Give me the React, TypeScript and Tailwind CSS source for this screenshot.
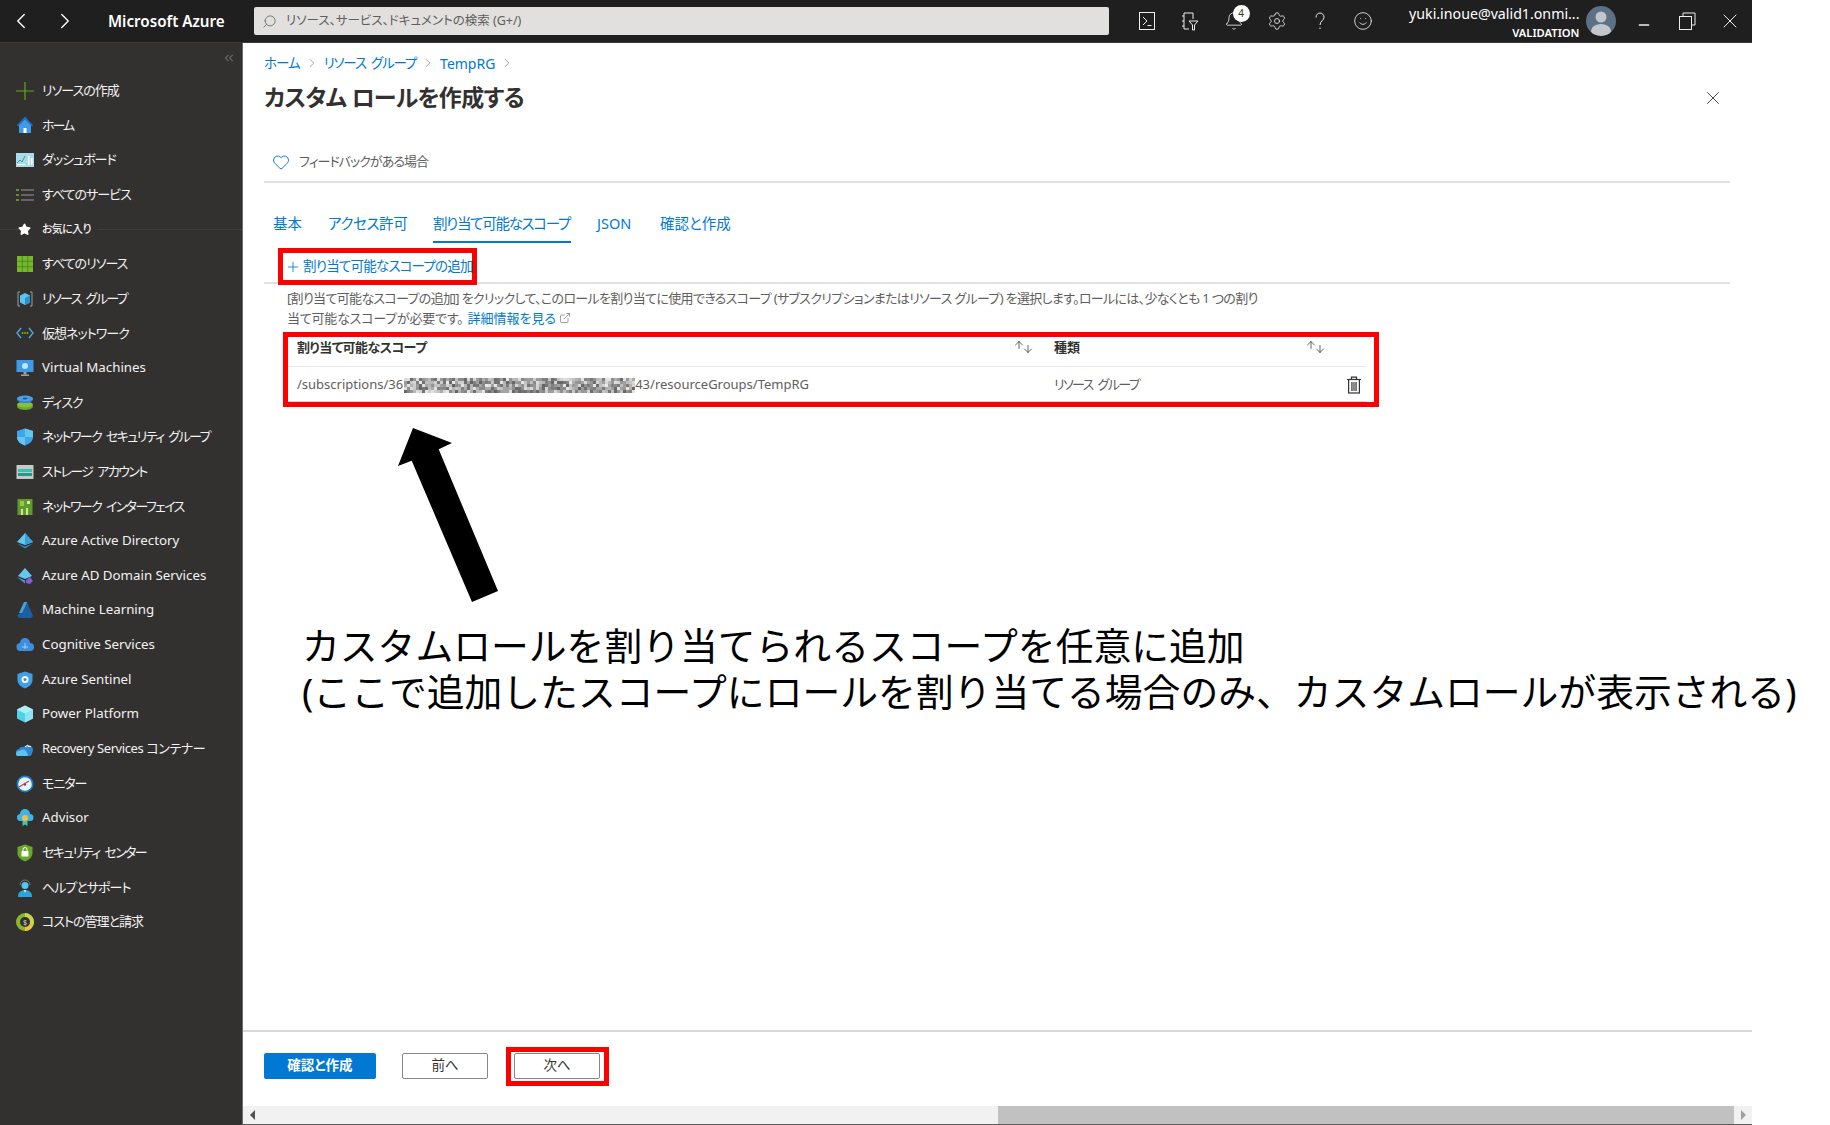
import type { ReactNode } from "react";
import { Search, ChevronLeft, ChevronRight, ChevronsLeft, Plus, X, Heart, ArrowUp, ArrowDown, Settings, Smile, Bell, Star, ExternalLink, Minus } from "lucide-react";

const Ico = ({ children }: { children: ReactNode }) => (
    <svg viewBox="0 0 18 18" className="w-[18px] h-[18px] shrink-0">{children}</svg>
);

const icons: Record<string, ReactNode> = {
    create: <><path d="M9 0v18M0 9h18" stroke="#5ea90f" strokeWidth="1.2" /></>,
    home: <><path d="M9 1 17 9.5h-2V17H3V9.500H1z" fill="#3f9ae8" /><path d="M9 1 1 9.500h2L9 3.500l6 6h2z" fill="#1c6fc4" /><rect x="7.500" y="12" width="3" height="5" fill="#fff" /></>,
    dashboard: <><rect x="0" y="2" width="18" height="14" fill="#a9dcea" /><path d="M1 12l3-3 2 2 3-6" stroke="#3a9a8a" fill="none" /><path d="M1 13.500h8" stroke="#fff" /><rect x="12" y="5" width="1.500" height="9" fill="#fff" /><rect x="15" y="7" width="1.500" height="7" fill="#fff" /></>,
    services: <><path d="M5 4h13M5 9h13M5 14h13" stroke="#9a9a9a" /><path d="M0 4h3M0 9h3M0 14h3" stroke="#6fb52c" strokeWidth="1.500" /></>,
    all: <><rect x="1" y="1" width="16" height="16" fill="#76b82a" /><path d="M6.300 1v16M11.700 1v16M1 6.300h16M1 11.700h16" stroke="#3f7d1c" strokeWidth="0.700" /></>,
    group: <><path d="M4 2H2v14h2M14 2h2v14h-2" stroke="#a0a0a0" fill="none" /><path d="M9 3l5 2.500v7L9 15l-5-2.500v-7z" fill="#59c4ec" /><path d="M9 8l5-2.500v7L9 15z" fill="#2e8fd0" /></>,
    vnet: <><path d="M5 4 1 9l4 5" stroke="#4aa8e0" fill="none" strokeWidth="1.400" /><path d="M13 4l4 5-4 5" stroke="#4aa8e0" fill="none" strokeWidth="1.400" /><circle cx="6.500" cy="9" r="0.900" fill="#7dbb2a" /><circle cx="9" cy="9" r="0.900" fill="#7dbb2a" /><circle cx="11.500" cy="9" r="0.900" fill="#7dbb2a" /></>,
    vm: <><rect x="0.500" y="1" width="17" height="12" fill="#3f9ae8" /><circle cx="9" cy="7" r="3" fill="#bfe8f8" /><rect x="7.500" y="13" width="3" height="2.500" fill="#a0a0a0" /><rect x="5" y="15.500" width="8" height="1.500" fill="#a0a0a0" /></>,
    disk: <><ellipse cx="9" cy="12.500" rx="8" ry="3.500" fill="#6aa82a" /><ellipse cx="9" cy="10.500" rx="8" ry="3" fill="#86c13c" /><ellipse cx="9" cy="5.500" rx="8" ry="3.500" fill="#2e7ed0" /><ellipse cx="9" cy="4.500" rx="8" ry="3" fill="#4aa0e8" /><ellipse cx="9" cy="4.500" rx="2.500" ry="1" fill="#1c5da0" /></>,
    nsg: <><path d="M9 0.500 17 3v6c0 4-3.500 7-8 8.500C4.500 16 1 13 1 9V3z" fill="#3fa5ec" /><path d="M9 0.500 17 3v6H9zM9 9H1c0 4 3.500 7 8 8.500z" fill="#65c6f2" /></>,
    storage: <><rect x="0.500" y="2" width="17" height="14" fill="#c8c8c8" /><rect x="2" y="6" width="14" height="3" fill="#37c2b1" /><rect x="2" y="10" width="14" height="3" fill="#1d9c8f" /></>,
    nic: <><rect x="1.500" y="1" width="15" height="16" fill="#5e9b2a" /><rect x="4" y="3" width="4" height="5" fill="#94c949" /><rect x="11" y="3" width="3" height="3" fill="#d8e8b0" /><rect x="5" y="11" width="2" height="6" fill="#cde5a0" /><rect x="10" y="10" width="2" height="7" fill="#cde5a0" /></>,
    aad: <><path d="M9 1l8 9-8 3-8-3z" fill="#63c8f0" /><path d="M9 1l8 9-8 3z" fill="#3a9fdc" /><path d="M1 11.500l8 3 8-3-8 5z" fill="#2e88c8" /></>,
    aadds: <><path d="M9 1l7 8-7 3-7-3z" fill="#63c8f0" /><path d="M1 10l8 3.500v3z" fill="#3a9fdc" /><path d="M10 13l4-3 3 4-3 3-4-1z" fill="#8a5ad0" /></>,
    ml: <><path d="M8 1h3l6 14-2 2H3l-2-3 4-2z" fill="#1d5f9e" /><path d="M8 1h3L9 6 6 12H3z" fill="#4aa0dc" /></>,
    cog: <><path d="M5 15a4 4 0 0 1-1-8 5 5 0 0 1 10 0 4 4 0 0 1 0 8z" fill="#3f8ee0" /><path d="M6 11h6M9 7v6" stroke="#b8e0f8" strokeWidth="0.800" /></>,
    sentinel: <><path d="M9 0.500 16.500 3v6c0 4-3.500 7-7.500 8.500C5 16 1.500 13 1.500 9V3z" fill="#3fa0e8" /><circle cx="9" cy="8.500" r="3.500" fill="#fff" /><circle cx="9" cy="8.500" r="1.500" fill="#2e8fd0" /></>,
    power: <><path d="M9 0.500l8 4v9l-8 4-8-4v-9z" fill="#50d0e8" /><path d="M9 8.500l8-4v9l-8 4z" fill="#8ae4f2" /><path d="M9 0.500l8 4-8 4-8-4z" fill="#b0eef6" /></>,
    recovery: <><path d="M4 16a3.500 3.500 0 0 1-1-7 4 4 0 0 1 5-2 4 4 0 0 1 8 6 3 3 0 0 1-2 3z" fill="#2e88d8" /><path d="M1 16a3 3 0 0 1 3-5 4 4 0 0 1 7 2 2 2 0 0 1 0 3z" fill="#5cc2ee" /><path d="M9 7l3-2v1.500h3" stroke="#fff" fill="none" /></>,
    monitor: <><circle cx="9" cy="9" r="8.500" fill="#1d78c8" /><circle cx="9" cy="9" r="6.800" fill="#e4f4fb" /><path d="M3 12 13 6" stroke="#d04040" strokeWidth="1.200" /><circle cx="9" cy="9.500" r="1.200" fill="#555" /></>,
    advisor: <><path d="M5 12a3.500 3.500 0 0 1-1-7 5 5 0 0 1 10 0 3.500 3.500 0 0 1 0 7z" fill="#40b4e8" /><path d="M6.500 11v6l2.500-1.500 2.500 1.500v-6z" fill="#40c8a8" /><circle cx="9" cy="9" r="3" fill="#f0c040" /></>,
    security: <><path d="M9 0.500 16.500 3v6c0 4-3.500 7-7.500 8.500C5 16 1.500 13 1.500 9V3z" fill="#6aa82a" /><rect x="5.500" y="7" width="7" height="5.500" rx="0.500" fill="#fff" /><path d="M7 7V5.500a2 2 0 0 1 4 0V7" stroke="#fff" fill="none" /></>,
    help: <><path d="M4 6a5 5 0 0 1 10 0" stroke="#777" fill="none" /><circle cx="9" cy="6.500" r="3.500" fill="#50c8f0" /><path d="M2 18c0-5 3-7 7-7s7 2 7 7z" fill="#2aa5dc" /><path d="M8 11h2l-1 3z" fill="#fff" /></>,
    cost: <><circle cx="9" cy="9" r="9" fill="#86b82a" /><path d="M9 0a9 9 0 0 1 8 13l-3.500-2A5 5 0 0 0 9 4z" fill="#c6d64a" /><path d="M17 13a9 9 0 0 1-8 5v-4a5 5 0 0 0 4.500-3z" fill="#f0c040" /><circle cx="9" cy="9" r="5" fill="#333130" /><text x="9" y="11.500" fontSize="7" textAnchor="middle" fill="#ddd">$</text></>,
};

const navItems: [string, string][] = [
    ["create", "リソースの作成"],
    ["home", "ホーム"],
    ["dashboard", "ダッシュボード"],
    ["services", "すべてのサービス"],
    ["", "お気に入り"],
    ["all", "すべてのリソース"],
    ["group", "リソース グループ"],
    ["vnet", "仮想ネットワーク"],
    ["vm", "Virtual Machines"],
    ["disk", "ディスク"],
    ["nsg", "ネットワーク セキュリティ グループ"],
    ["storage", "ストレージ アカウント"],
    ["nic", "ネットワーク インターフェイス"],
    ["aad", "Azure Active Directory"],
    ["aadds", "Azure AD Domain Services"],
    ["ml", "Machine Learning"],
    ["cog", "Cognitive Services"],
    ["sentinel", "Azure Sentinel"],
    ["power", "Power Platform"],
    ["recovery", "Recovery Services コンテナー"],
    ["monitor", "モニター"],
    ["advisor", "Advisor"],
    ["security", "セキュリティ センター"],
    ["help", "ヘルプとサポート"],
    ["cost", "コストの管理と請求"],
];

// kana is set tighter in the original, latin labels are not
function labelClass(label: string) {
    if (label === "ホーム") return "tracking-[-2px]";
    if (label.startsWith("Recovery")) return "tracking-[-0.4px]";
    if (/^[A-Z]/.test(label)) return "text-[13.3px]";
    return label.includes(" ") ? "tracking-[-1.6px] [word-spacing:3px]" : "tracking-[-1px]";
}

// pixelated part of the subscription id
const blurCells: { x: number; y: number; g: number }[] = [];
let seed = 17;
for (let y = 0; y < 5; y++) {
    for (let x = 0; x < 77; x++) {
        seed = (seed * 9301 + 49297) % 233280;
        blurCells.push({ x: x * 3, y: y * 3, g: 100 + Math.floor((seed / 233280) * 135) });
    }
}

function SortIcon() {
    return (
        <div className="flex">
            <ArrowUp className="w-[12px] h-[16px] -mt-[2px] text-[#333]" strokeWidth={1.5} />
            <ArrowDown className="w-[12px] h-[16px] mt-[2px] -ml-[3px] text-[#333]" strokeWidth={1.5} />
        </div>
    );
}

function Sidebar() {
    return (
        <aside className="w-[243px] shrink-0 bg-[#333130] border-r border-[#6b6b6b] text-[#f2f2f2] text-[13px]">
            <div className="h-[30.500px] flex justify-end items-center pr-[6px]">
                <ChevronsLeft className="w-[14px] h-[14px] text-[#aaa]" strokeWidth={1.25} />
            </div>
            {navItems.map(([icon, label]) =>
                icon ? (
                    <div key={label} className="h-[34.650px] flex items-center pl-[16px] gap-[8px] whitespace-nowrap">
                        <Ico>{icons[icon]}</Ico>
                        <span className={labelClass(label)}>{label}</span>
                    </div>
                ) : (
                    <div key={label} className="h-[34.650px] flex items-center">
                        <div className="w-[18px] h-px bg-[#3f3d3c]" />
                        <Star className="w-[13px] h-[13px] text-white fill-white" />
                        <span className="ml-[11px] mr-[6px] text-[11px] tracking-[-0.7px] font-medium">{label}</span>
                        <div className="flex-1 h-px bg-[#3f3d3c]" />
                    </div>
                )
            )}
        </aside>
    );
}

function Header() {
    return (
        <header className="h-[43px] shrink-0 bg-[#1f1f1f] border-b border-[#3a3a3a] flex items-center text-white">
            <ChevronLeft className="w-[26px] h-[26px] ml-[8px]" strokeWidth={1.25} />
            <ChevronRight className="w-[26px] h-[26px] ml-[18px]" strokeWidth={1.25} />
            <span className="ml-[30px] w-[146px] pt-[1px] text-[15.2px] font-semibold whitespace-nowrap">Microsoft Azure</span>
            <div className="w-[855px] h-[28px] bg-[#e1e0de] rounded-[2px] flex items-center pl-[8px] gap-[9px] text-[12.500px] text-[#605e5c]">
                <Search className="w-[15px] h-[15px] -scale-x-100 text-[#605e5c]" strokeWidth={1.25} />
                <span>リソース、サービス、ドキュメントの検索 (G+/)</span>
            </div>
            <div className="ml-[28px] flex items-center gap-[23.300px]">
                <svg viewBox="0 0 20 20" className="w-[20px] h-[20px]" fill="none" stroke="#eee">
                    <rect x="2.500" y="1.500" width="15" height="17" />
                    <path d="M6 6l4 4-4 4M10.500 14.500h4" />
                </svg>
                <svg viewBox="0 0 20 20" className="w-[20px] h-[20px]" fill="none" stroke="#eee">
                    <path d="M4 18V2h9v6M4 5H2M4 10H2M4 15H2M4 18h5" />
                    <path d="M9 10h9l-3.500 4v5h-2v-5z" />
                </svg>
                <div className="relative w-[20px] h-[20px]">
                    <Bell className="w-[20px] h-[20px] text-[#eee]" strokeWidth={1} />
                    <div className="absolute -top-[6px] left-[9px] w-[17px] h-[17px] rounded-full bg-white text-[#333] text-[10px] flex items-center justify-center">4</div>
                </div>
                <Settings className="w-[20px] h-[20px] text-[#eee]" strokeWidth={1} />
                <svg viewBox="0 0 20 20" className="w-[20px] h-[20px]" fill="none" stroke="#eee">
                    <path d="M6 6.500C6 3.500 8 2 10 2s4 1.500 4 4.300c0 3.200-4 3.700-4 7.700M10 16.500v1.500" />
                </svg>
                <Smile className="w-[20px] h-[20px] text-[#eee]" strokeWidth={1} />
            </div>
            <div className="ml-[21px] w-[186px] pt-[3px] flex flex-col items-end pr-[1px] leading-none whitespace-nowrap">
                <span className="text-[14.2px]">yuki.inoue@valid1.onmi...</span>
                <span className="text-[11.2px] font-semibold mt-[5px]">VALIDATION</span>
            </div>
            <svg viewBox="0 0 30 30" className="w-[30px] h-[30px] ml-[6px] shrink-0">
                <clipPath id="av"><circle cx="15" cy="15" r="15" /></clipPath>
                <circle cx="15" cy="15" r="15" fill="#5d7186" />
                <g clipPath="url(#av)" fill="#c3c7cc">
                    <circle cx="15" cy="11" r="5.500" />
                    <ellipse cx="15" cy="25" rx="10" ry="7" />
                </g>
            </svg>
            <Minus className="w-[16px] h-[16px] ml-[20px] mt-[8px] text-[#eee]" strokeWidth={2} />
            <svg viewBox="0 0 20 20" className="w-[20px] h-[20px] ml-[25px]" fill="none" stroke="#eee">
                <rect x="2.500" y="5.500" width="12" height="13" />
                <path d="M6 5V2h12v12h-3" />
            </svg>
            <X className="w-[24px] h-[24px] ml-[21px] text-[#eee]" strokeWidth={1} />
        </header>
    );
}

function Content() {
    return (
        <div className="flex-1 min-h-0 pl-[21px] pr-[22px] pt-[10px]">
            <div className="h-[20px] flex items-center text-[13.500px] text-[#0078d4] gap-[5px]">
                <span className="tracking-[-1px]">ホーム</span>
                <ChevronRight className="w-[14px] h-[14px] text-[#666]" strokeWidth={1} />
                <span className="tracking-[-1.2px] [word-spacing:3px]">リソース グループ</span>
                <ChevronRight className="w-[14px] h-[14px] text-[#666]" strokeWidth={1} />
                <span className="text-[14px]">TempRG</span>
                <ChevronRight className="w-[14px] h-[14px] text-[#666]" strokeWidth={1} />
            </div>
            <div className="mt-[4px] h-[40px] flex items-center justify-between">
                <h1 className="text-[23px] tracking-[-0.7px] font-semibold text-[#323130]">カスタム ロールを作成する</h1>
                <X className="w-[22px] h-[22px] mr-[6px] mt-[2px] text-[#333]" strokeWidth={1} />
            </div>
            <div className="mt-[33px] pb-[7px] border-b-2 border-[#e1e1e1] h-[33px] flex items-center pl-[8px] text-[13px] text-[#605e5c]">
                <Heart className="w-[18px] h-[18px] text-[#0078d4] mr-[9px]" strokeWidth={1.25} />
                <span className="tracking-[-1px]">フィードバックがある場合</span>
            </div>
            <div className="mt-[27px] flex h-[33px] text-[14.500px] text-[#0078d4] whitespace-nowrap">
                <div className="ml-[9px] w-[55px] pt-[3px]">基本</div>
                <div className="w-[105px] pt-[3px] tracking-[-0.4px]">アクセス許可</div>
                <div className="w-[138px] pt-[3px] tracking-[-1.3px] border-b-2 border-[#0078d4]">割り当て可能なスコープ</div>
                <div className="ml-[26px] w-[63px] pt-[3px]">JSON</div>
                <div className="pt-[3px]">確認と作成</div>
            </div>
            <div className="mt-[5px] h-[36px] border-b-2 border-[#e1e1e1]">
                <div className="ml-[14px] w-[199px] h-[37px] border-[5px] border-[#ff0000] bg-white flex items-center pl-[2px] text-[13.500px] tracking-[-0.8px] text-[#0078d4] whitespace-nowrap">
                    <Plus className="w-[16px] h-[16px] mr-[2px] shrink-0" strokeWidth={1.25} />
                    <span>割り当て可能なスコープの追加</span>
                </div>
            </div>
            <div className="mt-[5px] ml-[23px] text-[13px] leading-[19.500px] text-[#605e5c] whitespace-nowrap">
                <div className="tracking-[-0.67px]">[割り当て可能なスコープの追加] をクリックして、このロールを割り当てに使用できるスコープ (サブスクリプションまたはリソース グループ) を選択します。ロールには、少なくとも 1 つの割り</div>
                <div className="flex items-center">
                    <span className="tracking-[-0.2px]">当て可能なスコープが必要です。</span>
                    <span className="ml-[4px] text-[#0078d4]">詳細情報を見る</span>
                    <ExternalLink className="w-[12px] h-[12px] ml-[3px] text-[#666]" strokeWidth={1.25} />
                </div>
            </div>
            <div className="mt-[4px] ml-[19px] w-[1096px] h-[75px] border-[5px] border-[#ff0000] pr-[7px] text-[13px]">
                <div className="grid grid-cols-[766px_1fr] h-[30px] pb-[8px] items-center border-b border-[#e8e8e8] font-semibold text-[#323130]">
                    <div className="pl-[9px] pr-[20px] flex justify-between items-center">
                        <span className="tracking-[-0.5px]">割り当て可能なスコープ</span>
                        <SortIcon />
                    </div>
                    <div className="pr-[41px] flex justify-between items-center">
                        <span>種類</span>
                        <SortIcon />
                    </div>
                </div>
                <div className="grid grid-cols-[766px_1fr] h-[35px] pt-[2px] items-center border-b border-[#d8d8d8] text-[#605e5c]">
                    <div className="pl-[9px] flex items-center whitespace-nowrap">
                        <span className="mr-[1px]">/subscriptions/36</span>
                        <svg viewBox="0 0 231 15" className="w-[231px] h-[15px] shrink-0">
                            <filter id="px"><feGaussianBlur stdDeviation="0.7" /></filter>
                            <g filter="url(#px)">
                                {blurCells.map((c) => (
                                    <rect key={`${c.x}-${c.y}`} x={c.x} y={c.y} width="3" height="3" fill={`rgb(${c.g},${c.g},${c.g})`} />
                                ))}
                            </g>
                        </svg>
                        <span>43/resourceGroups/TempRG</span>
                    </div>
                    <div className="pr-[5px] flex justify-between items-center">
                        <span className="tracking-[-1.6px] [word-spacing:3px]">リソース グループ</span>
                        <svg viewBox="0 0 16 18" className="w-[16px] h-[18px]">
                            <path d="M1 3.500h14M5.500 3V1.200h5V3" fill="none" stroke="#333" strokeWidth="1.200" />
                            <rect x="2.600" y="3.500" width="10.800" height="13.500" fill="#fff" stroke="#333" strokeWidth="1.200" />
                            <rect x="5" y="6" width="6" height="9" fill="#777" />
                            <path d="M7 6v9M9 6v9" stroke="#ccc" strokeWidth="0.500" />
                        </svg>
                    </div>
                </div>
            </div>
        </div>
    );
}

function Footer() {
    return (
        <>
            <div className="h-[76px] shrink-0 border-t-2 border-[#d9d9d9] pl-[21px] pb-[6px] flex items-center text-[13.500px]">
                <button className="w-[112px] h-[26px] pb-[2px] bg-[#0078d4] rounded-[2px] text-white font-semibold">確認と作成</button>
                <button className="ml-[26px] w-[86px] h-[26px] pb-[2px] border border-[#8a8886] rounded-[2px] text-[#323130]">前へ</button>
                <div className="ml-[18px] w-[103px] h-[39px] border-[5px] border-[#ff0000] pl-[3px] flex items-center">
                    <button className="w-[86px] h-[26px] pb-[2px] border border-[#8a8886] rounded-[2px] text-[#323130]">次へ</button>
                </div>
            </div>
            <div className="h-[19px] shrink-0 bg-[#f1f1f1] border-b border-[#5c5c5c] flex">
                <div className="w-[18px] flex items-center justify-center">
                    <div className="w-0 h-0 border-y-[5px] border-y-transparent border-r-[5px] border-r-[#505050]" />
                </div>
                <div className="flex-1" />
                <div className="w-[736px] bg-[#c1c1c1]" />
                <div className="w-[18px] flex items-center justify-center">
                    <div className="w-0 h-0 border-y-[5px] border-y-transparent border-l-[5px] border-l-[#a0a0a0]" />
                </div>
            </div>
        </>
    );
}

export default function App() {
    return (
        <div className="relative w-[1830px] h-[1125px] overflow-hidden bg-white font-['Noto_Sans','Noto_Sans_CJK_JP',sans-serif] [font-feature-settings:'palt']">
            <div className="w-[1752px] h-full flex flex-col">
                <Header />
                <div className="flex flex-1 min-h-0">
                    <Sidebar />
                    <main className="flex-1 min-w-0 flex flex-col">
                        <Content />
                        <Footer />
                    </main>
                </div>
            </div>

            {/* annotation drawn over the screenshot */}
            <svg viewBox="0 0 120 190" className="absolute left-[390px] top-[420px] w-[120px] h-[190px]">
                <path d="M23 8 62 23 48.700 29.300 108 171 82 182 21.700 40.700 8 46z" fill="#000" />
            </svg>
            <div className="absolute left-[302px] top-[623px] text-[37.800px] leading-[45.500px] text-black whitespace-nowrap [font-feature-settings:normal]">
                <div>カスタムロールを割り当てられるスコープを任意に追加</div>
                <div>(ここで追加したスコープにロールを割り当てる場合のみ、カスタムロールが表示される)</div>
            </div>
        </div>
    );
}
